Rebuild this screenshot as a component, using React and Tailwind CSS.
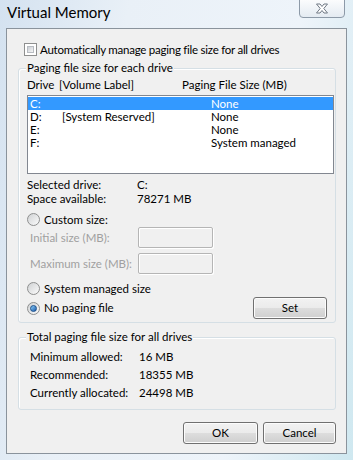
import React from "react";

const font = { fontFamily: 'Lato, "Noto Sans", sans-serif' };

function Checkbox() {
  return (
    <div className="w-[13px] h-[13px] border border-[#8e8f8f] bg-white p-[2px] shrink-0">
      <div className="w-full h-full bg-gradient-to-br from-[#cbcfd5] to-[#f6f6f6] border border-[#b8bcc2]" />
    </div>);

}

function Radio({ checked }) {
  return (
    <div className="w-[13px] h-[13px] rounded-full border border-[#8e8f8f] bg-gradient-to-br from-[#d0d2d4] to-[#fbfbfb] flex items-center justify-center shrink-0">
      {checked &&
      <div className="w-[7px] h-[7px] rounded-full bg-gradient-to-br from-[#8cd0fb] to-[#1c5aa8] border border-[#1a4f8c]" />
      }
    </div>);

}

function Button({ label, w }) {
  return (
    <div
      className={`${w} h-[22px] rounded-[3px] border border-[#707070] flex items-center justify-center text-black shadow-[inset_0_0_0_1px_#fcfcfc]`}
      style={{ background: "linear-gradient(#f2f2f2 0%, #ebebeb 50%, #dddddd 51%, #cfcfcf 100%)" }}>
      
      <span className="leading-[14px]">{label}</span>
    </div>);

}

function GroupBox({ title, className, children }) {
  return (
    <div className={`border border-[#d5dfe5] rounded-[3px] shadow-[inset_1px_1px_0_#ffffff] ${className}`}>
      <div className="-mt-[9px] ml-[7px] w-fit px-[1px] bg-[#f0f0f0] leading-[16px]">{title}</div>
      {children}
    </div>);

}

const drives = [
{ d: "C:", label: "", size: "None", sel: true },
{ d: "D:", label: "[System Reserved]", size: "None" },
{ d: "E:", label: "", size: "None" },
{ d: "F:", label: "", size: "System managed" }];


export default function App() {
  return (
    <div
      className="w-[353px] h-[460px] flex flex-col overflow-hidden text-[11.5px] text-black whitespace-nowrap"
      style={{ ...font, background: "linear-gradient(100deg, #d4e2f0 0%, #e9f0f7 30%, #eef4fa 70%, #cfe8f0 100%)" }}>
      
      {/* title bar */}
      <div className="h-[28px] flex items-start justify-between">
        <span className="pl-[7px] pt-[2px] text-[15px] leading-[20px] text-black">Virtual Memory</span>
        <div className="mr-[8px] -mt-[1px] w-[46px] h-[19px] border border-[#8d9aa8] rounded-b-[4px] bg-gradient-to-b from-[#fbfcfd] to-[#e4ebf2] flex items-center justify-center">
          <svg width="14" height="11" viewBox="0 0 14 11">
            <path d="M1.5 1 L5 1 L7 3.5 L9 1 L12.5 1 L8.8 5.5 L12.5 10 L9 10 L7 7.5 L5 10 L1.5 10 L5.2 5.5 Z" fill="#ffffff" stroke="#6f7884" strokeWidth="1" strokeLinejoin="round" />
          </svg>
        </div>
      </div>

      {/* client area */}
      <div className="mx-[6px] h-[426px] border border-[#8a939c] bg-[#f0f0f0] flex flex-col">
        <div className="mt-[14px] ml-[17px] flex items-center gap-[3px] h-[13px]">
          <Checkbox />
          <span className="leading-[14px] tracking-[-0.25px]">Automatically manage paging file size for all drives</span>
        </div>

        <GroupBox title="Paging file size for each drive" className="mt-[12px] ml-[11px] mr-[10px] h-[255px]">
          <div className="flex leading-[16px] mt-[1px] ml-[8px]">
            <span className="w-[32px]">Drive</span>
            <span className="w-[123px]">[Volume Label]</span>
            <span>Paging File Size (MB)</span>
          </div>
          <div className="mt-[2px] ml-[8px] mr-[1px] h-[79px] border border-[#828790] bg-white pt-[1px]">
            {drives.map((r) =>
            <div
              key={r.d}
              className={`flex h-[13px] items-center leading-[13px] ${r.sel ? "bg-[#3399ff] text-white" : "text-black"}`}>
              
                <span className="w-[34px] pl-[2px]">{r.d}</span>
                <span className="w-[149px]">{r.label}</span>
                <span>{r.size}</span>
              </div>
            )}
          </div>

          <div className="mt-[4px] ml-[8px] grid grid-cols-[110px_1fr] leading-[14px]">
            <span>Selected drive:</span>
            <span>C:</span>
            <span>Space available:</span>
            <span>78271 MB</span>
          </div>

          <div className="mt-[7px] ml-[8px] flex items-center gap-[4px] h-[13px]">
            <Radio />
            <span className="leading-[14px]">Custom size:</span>
          </div>

          <div className="mt-[1px] ml-[11px] flex flex-col gap-[5px] text-[#a0a0a0]">
            {["Initial size (MB):", "Maximum size (MB):"].map((l) =>
            <div key={l} className="flex items-center h-[21px]">
                <span className="w-[108px] leading-[14px]">{l}</span>
                <div className="w-[75px] h-[21px] border border-[#b5b5b5] rounded-[2px] shadow-[inset_1px_1px_0_#ffffff,1px_1px_0_#ffffff]" />
              </div>
            )}
          </div>

          <div className="mt-[8px] ml-[8px] flex items-center gap-[4px] h-[13px]">
            <Radio />
            <span className="leading-[14px]">System managed size</span>
          </div>

          <div className="mt-[2px] ml-[8px] mr-[8px] flex items-center justify-between">
            <div className="flex items-center gap-[4px] h-[13px]">
              <Radio checked />
              <span className="leading-[14px]">No paging file</span>
            </div>
            <Button label="Set" w="w-[74px]" />
          </div>
        </GroupBox>

        <GroupBox title="Total paging file size for all drives" className="mt-[14px] ml-[11px] mr-[10px] h-[73px]">
          <div className="mt-[5px] ml-[11px] grid grid-cols-[109px_1fr] gap-y-[4px] leading-[14px]">
            <span>Minimum allowed:</span>
            <span>16 MB</span>
            <span>Recommended:</span>
            <span>18355 MB</span>
            <span>Currently allocated:</span>
            <span>24498 MB</span>
          </div>
        </GroupBox>

        <div className="mt-[12px] mr-[10px] flex justify-end gap-[5px]">
          <Button label="OK" w="w-[75px]" />
          <Button label="Cancel" w="w-[73px]" />
        </div>
      </div>
    </div>);

}
